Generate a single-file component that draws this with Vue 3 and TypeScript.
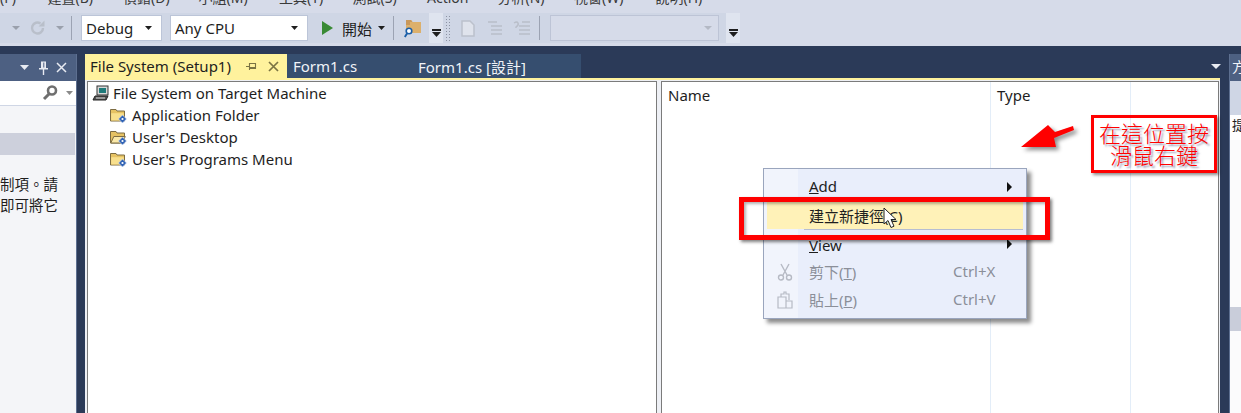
<script setup lang="ts">
const menus = [
  { t: '(F)', w: 20 }, { t: '建置(B)', w: 48 }, { t: '偵錯(D)', w: 48 }, { t: '小組(M)', w: 53 },
  { t: '工具(T)', w: 46 }, { t: '測試(S)', w: 47 }, { t: 'Action', w: 43 }, { t: '分析(N)', w: 49 },
  { t: '視窗(W)', w: 54 }, { t: '說明(H)', w: 49 },
]
const folders = [
  { name: 'Application Folder', open: false },
  { name: "User's Desktop", open: true },
  { name: "User's Programs Menu", open: false },
]
</script>

<template>
  <div class="root">
    <div class="menubar">
      <span v-for="m in menus" :key="m.t" class="menu-item" :style="{ width: m.w + 'px' }">{{ m.t }}</span>
    </div>

    <div class="toolbar">
      <div class="tray">
        <svg class="caret-g first" width="8" height="4"><path d="M0 0h8L4 4z" fill="#9aa0ac" /></svg>
        <svg class="redo" width="18" height="18" viewBox="0 0 18 18">
          <path d="M14 9a5.5 5.5 0 1 1-2.5-4.6" fill="none" stroke="#b9bfca" stroke-width="2.4" />
          <path d="M15.5 1.5v6h-6z" fill="#b9bfca" />
        </svg>
        <svg class="caret-g second" width="8" height="4"><path d="M0 0h8L4 4z" fill="#9aa0ac" /></svg>
        <i class="sep s1"></i>
        <div class="combo debug"><span>Debug</span><svg width="7" height="4"><path d="M0 0h7L3.5 4z" fill="#1e1e1e" /></svg></div>
        <div class="combo cpu"><span>Any CPU</span><svg width="7" height="4"><path d="M0 0h7L3.5 4z" fill="#1e1e1e" /></svg></div>
        <svg class="play" width="11" height="14"><path d="M0 0l11 7-11 7z" fill="#388a34" /></svg>
        <span class="start">開始</span>
        <svg class="caret-k" width="7" height="4"><path d="M0 0h7L3.5 4z" fill="#1e1e1e" /></svg>
        <i class="sep s2"></i>
        <svg class="find" width="18" height="19" viewBox="0 0 18 19">
          <path d="M2 1h5l1.500 2H17v11H2z" fill="#dcb06c" />
          <path d="M2 1h5l1.500 2H6v3H2z" fill="#c9985a" />
          <circle cx="5" cy="12" r="2.800" fill="#fff" stroke="#1b5fa8" stroke-width="1.600" />
          <path d="M3 14.500L.8 18" stroke="#1b5fa8" stroke-width="2" />
        </svg>
      </div>
      <div class="overflow o1"><i></i><svg width="9" height="5"><path d="M0 0h9L4.500 5z" fill="#1e1e1e" /></svg></div>
      <div class="strip">
        <div class="grip"></div>
        <svg class="doc" width="14" height="17" viewBox="0 0 14 17"><path d="M1 1h8l4 4v11H1z" fill="#dfe3ec" stroke="#bcc1cc" stroke-width="1.500" /></svg>
        <svg class="lines" width="14" height="15" viewBox="0 0 14 15"><path d="M0 1h9M3 5h11M3 9h11M3 13h11" stroke="#b9bec9" stroke-width="1.400" /></svg>
        <svg class="lines2" width="17" height="15" viewBox="0 0 17 15"><path d="M6 5h11M6 9h11M6 13h11M9 1h8" stroke="#b9bec9" stroke-width="1.400" /><path d="M1 2q3-2 4 0t-2 4v1" fill="none" stroke="#b9bec9" stroke-width="1.500" /></svg>
        <i class="sep s3"></i>
        <div class="combo disabled"><svg width="8" height="4"><path d="M0 0h8L4 4z" fill="#b4b9c5" /></svg></div>
      </div>
      <div class="overflow o2"><i></i><svg width="9" height="5"><path d="M0 0h9L4.500 5z" fill="#1e1e1e" /></svg></div>
    </div>

    <div class="dock">
      <aside class="left">
        <div class="panel-head">
          <svg width="9" height="5"><path d="M0 0h9L4.500 5z" fill="#e8ebf2" /></svg>
          <svg class="pin" width="9" height="14" viewBox="0 0 9 14"><path d="M2 .5h5v6.500h2v1.500H0V7h2zM3.800 8h1.400v6H3.800z" fill="#e8ebf2" /><path d="M4.800 1.500v5" stroke="#4d6082" /></svg>
          <svg width="11" height="11"><path d="M1 1l9 9M10 1l-9 9" stroke="#e8ebf2" stroke-width="1.500" /></svg>
        </div>
        <div class="search">
          <svg width="16" height="16" viewBox="0 0 16 16"><circle cx="10" cy="5.500" r="4" fill="none" stroke="#6f6f6f" stroke-width="2.600" /><path d="M7 9l-5 5" stroke="#6f6f6f" stroke-width="3" /></svg>
          <svg class="s-caret" width="7" height="4"><path d="M0 0h7L3.500 4z" fill="#8a8a8a" /></svg>
        </div>
        <div class="left-list"></div>
        <div class="left-sel"></div>
        <p class="left-text"><span>制項。請</span><span>即可將它</span></p>
      </aside>

      <main class="center">
        <div class="tabs">
          <div class="tab active">
            <span class="tab-label">File System (Setup1)</span>
            <svg class="tab-pin" width="11" height="9" viewBox="0 0 11 9"><path d="M0 4.500h3M3.500 1v7M3.500 1.500h6v5h-6M3.500 5.500h6" fill="none" stroke="#7a7343" stroke-width="1.100" /></svg>
            <svg class="tab-x" width="11" height="11"><path d="M1 1l9 9M10 1l-9 9" stroke="#7a7343" stroke-width="1.700" /></svg>
          </div>
          <div class="tab inactive">
            <span class="form-a">Form1.cs</span>
            <span class="form-b">Form1.cs [設計]</span>
          </div>
          <svg class="tabs-caret" width="10" height="5"><path d="M0 0h10L5 5z" fill="#e8ebf2" /></svg>
        </div>
        <div class="tab-line"></div>
        <div class="panes">
          <section class="pane tree">
            <div class="tree-row root-row">
              <svg width="18" height="16" viewBox="0 0 18 16">
                <rect x="5" y="1" width="11" height="9" fill="#d8d8d8" stroke="#333" />
                <rect x="7" y="3" width="7" height="5" fill="#1f7a7a" />
                <path d="M3 11h13l-2 4H1z" fill="#555" stroke="#222" />
                <path d="M4 13h9" stroke="#ddd" />
              </svg>
              <span>File System on Target Machine</span>
            </div>
            <div v-for="f in folders" :key="f.name" class="tree-row child-row">
              <svg width="17" height="15" viewBox="0 0 17 15">
                <path d="M.5 1.500h5.500l1 1.500h7.500v10H.5z" fill="#e6c263" stroke="#7d6c42" />
                <path v-if="f.open" d="M.8 13l3-6.500h11.500l-3 6.500z" fill="#fbe9a8" stroke="#7d6c42" />
                <path v-else d="M1.200 5.200h12.600v7.300H1.200z" fill="#f8df8c" />
                <path d="M12.500 7l4 4-4 4-4-4z" fill="#2f62b5" stroke="#dbe7fb" stroke-width=".6" />
                <circle cx="12.500" cy="11" r="1.100" fill="#fff" />
              </svg>
              <span>{{ f.name }}</span>
            </div>
          </section>
          <section class="pane list">
            <div class="col c-name">Name</div>
            <div class="col c-type">Type</div>
            <div class="col c-rest"></div>
          </section>
        </div>
      </main>

      <aside class="right">
        <div class="r-head">方</div>
        <div class="r-tool"></div>
        <div class="r-input">提</div>
        <div class="r-blank"></div>
        <div class="r-sel"></div>
        <div class="r-end"></div>
      </aside>
    </div>

    <!-- Context menu -->
    <div class="ctx">
      <div class="ctx-row add">
        <span class="ctx-label"><u>A</u>dd</span>
        <svg class="ctx-arrow" width="5" height="10"><path d="M0 0l5 5-5 5z" fill="#111" /></svg>
      </div>
      <div class="ctx-row hot"><span class="ctx-label">建立新捷徑(C)</span></div>
      <div class="ctx-sep"></div>
      <div class="ctx-row view">
        <span class="ctx-label"><u>V</u>iew</span>
        <svg class="ctx-arrow" width="5" height="10"><path d="M0 0l5 5-5 5z" fill="#111" /></svg>
      </div>
      <div class="ctx-row off">
        <svg class="ctx-icon" width="16" height="18" viewBox="0 0 16 18"><path d="M4 1l6 11M12 1L6 12" stroke="#b6bac4" stroke-width="1.400" fill="none" /><circle cx="4" cy="14.500" r="2.500" fill="none" stroke="#b6bac4" stroke-width="1.400" /><circle cx="12" cy="14.500" r="2.500" fill="none" stroke="#b6bac4" stroke-width="1.400" /></svg>
        <span class="ctx-label">剪下(<u>T</u>)</span>
        <span class="ctx-key">Ctrl+X</span>
      </div>
      <div class="ctx-row off">
        <svg class="ctx-icon" width="16" height="18" viewBox="0 0 16 18"><path d="M1 6h8v11H1zM9 10h6v7H9zM4 6V3h3V1h2v2h3v6" fill="none" stroke="#b6bac4" stroke-width="1.200" /></svg>
        <span class="ctx-label">貼上(<u>P</u>)</span>
        <span class="ctx-key">Ctrl+V</span>
      </div>
    </div>

    <!-- Annotations -->
    <div class="mark"></div>
    <svg class="cursor" width="15" height="23" viewBox="0 0 15 23">
      <path d="M1 1v16l4-3.500 3 7 3-1.300-3-6.700h5z" fill="#fff" stroke="#222" stroke-width="1" />
    </svg>
    <svg class="arrow" width="60" height="36" viewBox="0 0 60 36">
      <path d="M0 26L27 4l7 7 18-6 1 4-20 8 2 9z" fill="#ff0000" />
    </svg>
    <div class="note">
      <span>在這位置按</span>
      <span>滑鼠右鍵</span>
    </div>
  </div>
</template>

<style>
html, body { margin: 0; background: #2b3a58; }
</style>

<style scoped>
.root {
  position: relative;
  width: 1241px;
  height: 413px;
  overflow: hidden;
  display: flex;
  flex-direction: column;
  background: #d6dbe9;
  font-family: "Noto Sans", "Noto Sans CJK TC", sans-serif;
  font-size: 15px;
  color: #1e1e1e;
}
.menubar {
  height: 13px;
  flex: none;
  display: flex;
  gap: 27.500px;
  align-items: flex-end;
  overflow: hidden;
  padding-bottom: 5px;
  box-sizing: border-box;
}
.menu-item {
  flex: none;
  line-height: 20px;
  font-size: 14px;
  white-space: nowrap;
  color: #3a3a3a;
}
.toolbar {
  height: 33px;
  flex: none;
  display: flex;
  align-items: stretch;
}
.tray, .strip {
  display: flex;
  align-items: center;
  height: 30px;
  background: #cfd6e5;
}
.tray { width: 429px; }
.strip { width: 283px; }
.caret-g.first { margin-left: 12px; }
.redo { margin-left: 9px; }
.caret-g.second { margin-left: 9px; }
.sep { width: 1px; height: 24px; background: #9ca3b3; flex: none; display: block; }
.s1 { margin-left: 7px; }
.combo {
  box-sizing: border-box;
  height: 26px;
  background: #fff;
  border: 1px solid #bcc5d8;
  display: flex;
  align-items: center;
  justify-content: space-between;
  padding: 0 9px 0 4px;
  flex: none;
  font-size: 15px;
}
.debug { width: 81px; margin-left: 9px; }
.cpu { width: 138px; margin-left: 8px; }
.play { margin-left: 14px; }
.start { margin-left: 9px; font-size: 15px; width: 31px; white-space: nowrap; }
.caret-k { margin-left: 5px; }
.s2 { margin-left: 8px; }
.find { margin-left: 10px; }
.overflow {
  width: 14px;
  height: 30px;
  background: #dfe4ef;
  display: flex;
  flex-direction: column;
  align-items: center;
  justify-content: flex-end;
  padding-bottom: 6px;
  box-sizing: border-box;
  gap: 1px;
  flex: none;
}
.overflow i { display: block; width: 9px; height: 2px; background: #1e1e1e; }
.grip {
  width: 6px;
  height: 26px;
  margin-left: 2px;
  background-image: radial-gradient(#8c93a3 .8px, transparent 1px);
  background-size: 3px 3px;
}
.doc { margin-left: 10px; }
.lines { margin-left: 13px; }
.lines2 { margin-left: 11px; }
.s3 { margin-left: 9px; }
.disabled {
  width: 169px;
  margin-left: 10px;
  background: #d6dbe9;
  border: 1px solid #bdc4d6;
  justify-content: flex-end;
  padding-right: 6px;
}
.dock {
  flex: 1;
  min-height: 0;
  background: #2b3a58;
  display: flex;
  align-items: stretch;
}
.left {
  width: 76px;
  flex: none;
  margin-top: 8px;
  background: #f4f5f8;
  display: flex;
  flex-direction: column;
  border-right: 1px solid #5d6f90;
}
.panel-head {
  height: 27px;
  flex: none;
  background: #4d6082;
  display: flex;
  align-items: center;
  justify-content: flex-end;
  gap: 8px;
  padding-right: 9px;
  box-sizing: border-box;
}
.pin { margin-left: 2px; }
.search {
  height: 25px;
  flex: none;
  background: #fff;
  display: flex;
  align-items: center;
  justify-content: flex-end;
  gap: 8px;
  padding-right: 3px;
  box-sizing: border-box;
  border-bottom: 1px solid #cfd6e5;
}
.left-list { height: 27px; flex: none; }
.left-sel { height: 22px; flex: none; background: #cdd0dc; margin-right: 1px; }
.left-text {
  margin: 19px 0 0;
  flex: 1;
  font-size: 14.500px;
  line-height: 21px;
  display: flex;
  flex-direction: column;
  overflow: hidden;
  padding-right: 18px;
  align-items: flex-end;
  white-space: nowrap;
}
.center {
  width: 1135px;
  margin-left: 8px;
  flex: none;
  display: flex;
  flex-direction: column;
  padding-top: 8px;
  box-sizing: border-box;
}
.tabs { height: 24px; display: flex; flex: none; position: relative; }
.tab { display: flex; align-items: center; height: 24px; box-sizing: border-box; white-space: nowrap; }
.tab.active { width: 202px; background: #fff29d; padding-left: 5px; }
.tab-label { width: 156px; flex: none; }
.tab-x { margin-left: 11px; }
.tab.inactive { width: 294px; background: #364e6f; color: #f0f3f8; padding-left: 6px; }
.form-a { width: 125px; flex: none; }
.tabs-caret { position: absolute; right: -1px; top: 10px; }
.tab-line { height: 2px; background: #fff29d; flex: none; }
.panes {
  flex: 1;
  min-height: 0;
  display: flex;
  gap: 4px;
  background: #eef0f5;
  padding: 1px 1px 0 2px;
}
.pane { background: #fff; box-sizing: border-box; border: 1px solid #7b7b7b; border-bottom: 0; }
.tree { width: 570px; padding: 0 0 0 4px; }
.list { flex: 1; display: flex; }
.tree-row { display: flex; align-items: center; height: 22px; white-space: nowrap; }
.root-row { gap: 3px; }
.child-row { margin-left: 18px; gap: 5px; }
.col { box-sizing: border-box; padding: 3px 0 0 6px; border-right: 1px solid #e3edf8; height: 100%; }
.c-name { width: 329px; }
.c-type { width: 140px; }
.c-rest { flex: 1; border-right: 0; }
.right {
  margin-left: 9px;
  margin-top: 8px;
  flex: 1;
  display: flex;
  flex-direction: column;
  background: #fff;
  border-left: 1px solid #5d6f90;
  overflow: hidden;
}
.r-head { height: 27px; flex: none; background: #4d6082; color: #f0f3f8; padding-left: 2px; font-size: 14px; line-height: 26px; }
.r-tool { height: 34px; flex: none; background: #cfd6e5; }
.r-input { height: 25px; flex: none; background: #fff; font-size: 13px; padding-left: 2px; line-height: 21px; }
.r-blank { height: 167px; flex: none; background: #fbfbfc; }
.r-sel { height: 24px; flex: none; background: #c9cdda; }
.r-end { flex: 1; background: #fbfbfc; }

.ctx {
  position: absolute;
  left: 763px;
  top: 168px;
  width: 264px;
  height: 151px;
  box-sizing: border-box;
  border: 1px solid #9aa5bd;
  background: linear-gradient(to right, #f1f4fc 34px, #e9eefb 34px);
  box-shadow: 4px 4px 4px rgba(0, 0, 0, .45);
  padding: 4px 3px 0;
}
.ctx-row {
  position: relative;
  height: 28px;
  box-sizing: border-box;
  display: flex;
  align-items: center;
  padding-left: 42px;
}
.add { padding-bottom: 2px; }
.view { height: 28px; padding-top: 1px; }
.hot { background: #fff2b8; }
.ctx-sep { height: 1px; margin-left: 37px; background: #b6bed2; }
.ctx-row.off { color: #8b8f99; height: 27.500px; }
.ctx-label { white-space: nowrap; }
.ctx-arrow { position: absolute; right: 11px; top: 9px; }
.ctx-icon { position: absolute; left: 10px; top: 5px; }
.ctx-key { position: absolute; left: 186px; top: 3px; }
.mark {
  position: absolute;
  left: 739px;
  top: 197px;
  width: 311px;
  height: 43px;
  box-sizing: border-box;
  border: 5px solid #f00;
  box-shadow: 2px 2px 3px rgba(0, 0, 0, .5), inset 2px 2px 3px rgba(0, 0, 0, .3);
}
.cursor { position: absolute; left: 883px; top: 207px; }
.arrow {
  position: absolute;
  left: 1021px;
  top: 121px;
  filter: drop-shadow(3px 3px 2px rgba(0, 0, 0, .45));
}
.note {
  position: absolute;
  left: 1091px;
  top: 115px;
  width: 126px;
  height: 58px;
  box-sizing: border-box;
  border: 3px solid #f00;
  box-shadow: 2px 2px 3px rgba(0, 0, 0, .45);
  display: flex;
  flex-direction: column;
  align-items: center;
  justify-content: center;
  color: #f00;
  font-size: 22px;
  line-height: 22px;
  font-weight: 300;
  text-shadow: 2px 2px 2px rgba(60, 60, 110, .55);
}
</style>
